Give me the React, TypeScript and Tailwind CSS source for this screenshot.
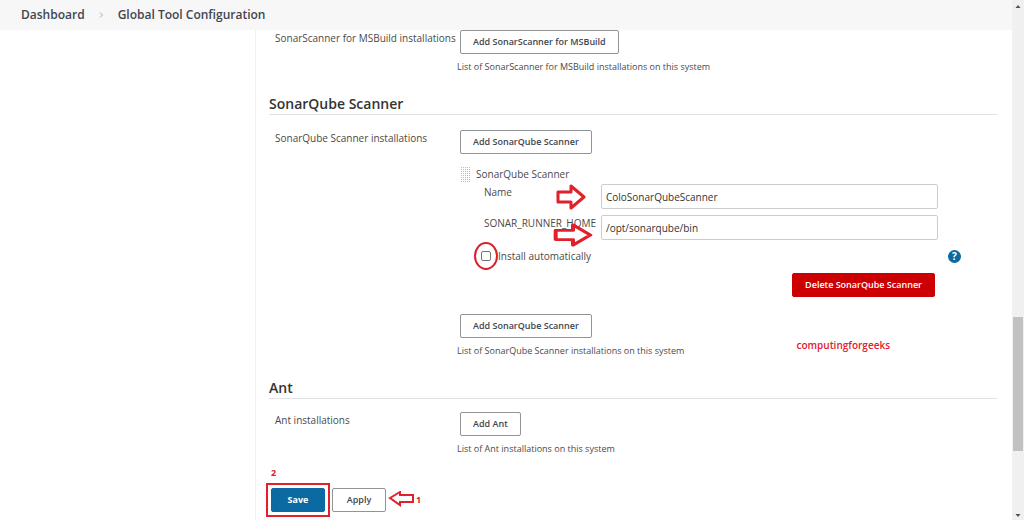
import * as React from "react";
import { clsx } from "clsx";

type ButtonProps = React.ButtonHTMLAttributes<HTMLButtonElement> & {
  variant?: "outline" | "primary" | "danger";
};

function Button({ variant = "outline", className, ...props }: ButtonProps) {
  return (
    <button
      type="button"
      className={clsx(
        "h-6 rounded-xs border px-3 text-[9px] leading-3 whitespace-nowrap",
        variant === "outline" &&
          "border-[#8f9499] bg-white font-semibold text-[#3f464f]",
        variant === "primary" &&
          "border-[#0b6aa2] bg-[#0b6aa2] font-bold text-white",
        variant === "danger" &&
          "border-[#cc0003] bg-[#cc0003] font-semibold text-white",
        className
      )}
      {...props}
    />
  );
}

function ArrowRight({ className }: { className?: string }) {
  return (
    <svg
      viewBox="0 0 30 26"
      preserveAspectRatio="none"
      className={clsx("absolute", className)}
      fill="none"
      stroke="#e0202a"
      strokeWidth="3"
      strokeLinejoin="round"
    >
      <path d="M2 8H15V2L28 13L15 24V18H2Z" />
    </svg>
  );
}

function SectionTitle({ children }: { children: React.ReactNode }) {
  return (
    <h2 className="border-b border-[#e2e2e2] text-[14px] leading-5 font-semibold text-[#333]">
      {children}
    </h2>
  );
}

function SettingRow({
  label,
  children,
}: {
  label: string;
  children: React.ReactNode;
}) {
  return (
    <div className="grid grid-cols-[182px_1fr] pl-1.5">
      <div className="leading-4 whitespace-nowrap">{label}</div>
      <div>{children}</div>
    </div>
  );
}

function Hint({ children }: { children: React.ReactNode }) {
  return <p className="mt-[7px] text-[9px] leading-3">{children}</p>;
}

function DragHandle() {
  return (
    <svg width="9" height="15" className="text-[#bbb]" fill="currentColor">
      {[0, 2, 4, 6, 8, 10, 12, 14].map((y) =>
        [0, 2, 4, 6, 8].map((x) => (
          <rect key={`${x}-${y}`} x={x} y={y} width="1" height="1" />
        ))
      )}
    </svg>
  );
}

function TextField({
  id,
  label,
  value,
  children,
}: {
  id: string;
  label: string;
  value: string;
  children?: React.ReactNode;
}) {
  return (
    <div className="relative grid grid-cols-[117px_1fr]">
      <label htmlFor={id} className="leading-4">
        {label}
      </label>
      <input
        id={id}
        type="text"
        defaultValue={value}
        className="h-[25px] w-full rounded-xs border border-[#ccc] bg-white px-1 text-[#333]"
      />
      {children}
    </div>
  );
}

function ScannerForm() {
  return (
    <div className="mt-3 pl-1">
      <div className="flex items-center gap-1.5">
        <DragHandle />
        <span className="leading-4">SonarQube Scanner</span>
      </div>
      <div className="mt-0.5 flex flex-col gap-1.5 pr-[59px] pl-[23px]">
        <TextField id="name" label="Name" value="ColoSonarQubeScanner">
          <ArrowRight className="top-0 left-[72px] h-[26px] w-[30px]" />
        </TextField>
        <TextField
          id="home"
          label="SONAR_RUNNER_HOME"
          value="/opt/sonarqube/bin"
        >
          <ArrowRight className="top-2 left-[69px] h-6 w-10" />
        </TextField>
      </div>
      <div className="mt-2 flex items-center pr-9 pl-5">
        <span className="relative flex">
          <input
            id="auto"
            type="checkbox"
            className="size-[10px] appearance-none rounded-xs border border-[#767676] bg-white"
          />
          <svg
            viewBox="0 0 24 28"
            className="pointer-events-none absolute -top-[9px] -left-[7px] h-7 w-6"
            fill="none"
            stroke="#d9222b"
            strokeWidth="2"
          >
            <ellipse cx="12" cy="14" rx="11" ry="13" />
          </svg>
        </span>
        <label htmlFor="auto" className="ml-[7px] leading-4">
          Install automatically
        </label>
        <button
          type="button"
          aria-label="Help"
          className="ml-auto size-[13px] rounded-full bg-[#0b6aa2] text-[10px] leading-[13px] font-bold text-white"
        >
          ?
        </button>
      </div>
      <div className="mt-[9px] flex justify-end pr-[62px]">
        <Button variant="danger">Delete SonarQube Scanner</Button>
      </div>
    </div>
  );
}

function Scrollbar() {
  return (
    <div className="flex w-3 shrink-0 flex-col items-center bg-[#f0f0f0]">
      <svg width="6" height="12" fill="#505050">
        <path d="M0.5 8L3 5L5.5 8Z" />
      </svg>
      <div className="flex-[305]" />
      <div className="w-2.5 flex-[134] bg-[#c1c1c1]" />
      <div className="flex-[57]" />
      <svg width="6" height="12" fill="#505050">
        <path d="M0.5 6L3 9L5.5 6Z" />
      </svg>
    </div>
  );
}

export default function App() {
  return (
    <div className="flex min-h-screen bg-white font-['Open_Sans',sans-serif] text-[10px] text-[#4a4a4a]">
      <div className="flex min-w-0 flex-1 flex-col">
        <nav className="flex h-[30px] items-center bg-[#f7f7f7] pl-[21px] text-[12px] font-semibold text-[#3f464f]">
          <a href="#">Dashboard</a>
          <svg
            width="5"
            height="6"
            className="mx-3.5"
            fill="none"
            stroke="#aaa"
          >
            <path d="M1 0.5L3.5 3L1 5.5" />
          </svg>
          <a href="#">Global Tool Configuration</a>
        </nav>
        <div className="flex flex-1">
          <aside className="w-64 shrink-0 border-r border-[#f0f0f0]" />
          <main className="min-w-0 flex-1 pr-[15px] pl-[13px]">
            <SettingRow label="SonarScanner for MSBuild installations">
              <Button className="ml-[3px]">Add SonarScanner for MSBuild</Button>
              <Hint>List of SonarScanner for MSBuild installations on this system</Hint>
            </SettingRow>

            <div className="mt-[21px] mb-[15px]">
              <SectionTitle>SonarQube Scanner</SectionTitle>
            </div>
            <SettingRow label="SonarQube Scanner installations">
              <Button className="ml-[3px]">Add SonarQube Scanner</Button>
              <ScannerForm />
              <Button className="mt-[17px] ml-[3px]">Add SonarQube Scanner</Button>
              <div className="relative">
                <Hint>List of SonarQube Scanner installations on this system</Hint>
                <span className="absolute -top-2 right-[107px] text-[10px] leading-4 font-semibold text-[#e0202a]">
                  computingforgeeks
                </span>
              </div>
            </SettingRow>

            <div className="mt-[21px] mb-[13px]">
              <SectionTitle>Ant</SectionTitle>
            </div>
            <SettingRow label="Ant installations">
              <Button className="ml-[3px]">Add Ant</Button>
              <Hint>List of Ant installations on this system</Hint>
            </SettingRow>

            <div className="relative mt-7 flex items-center">
              <span className="absolute -top-4 left-0.5 text-[9px] leading-3 font-bold text-[#e0202a]">
                2
              </span>
              <div className="-ml-[3px] border-2 border-[#e0202a] p-[3px]">
                <Button variant="primary" className="w-[54px]">
                  Save
                </Button>
              </div>
              <Button className="ml-0.5 w-[54px]">Apply</Button>
              <svg
                width="28"
                height="18"
                fill="none"
                stroke="#e0202a"
                strokeWidth="2"
              >
                <path d="M4 7L14 1V4H27V11H14V14Z" />
              </svg>
              <span className="ml-0.5 text-[9px] leading-3 font-bold text-[#e0202a]">1</span>
            </div>
          </main>
        </div>
      </div>
      <Scrollbar />
    </div>
  );
}
